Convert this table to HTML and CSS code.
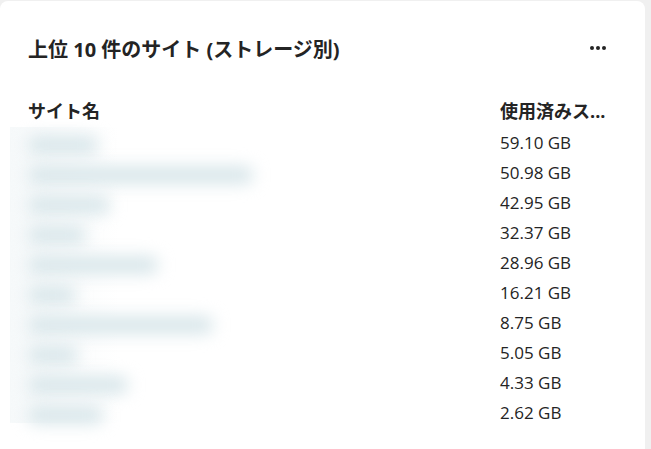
FILE: index.html
```html
<!DOCTYPE html>
<html lang="ja">
<head>
<meta charset="utf-8">
<link rel="stylesheet" href="styles.css">
</head>
<body>
<div class="card">
  <div class="card-head">
    <h2 class="title">上位 10 件のサイト (ストレージ別)</h2>
    <button class="more" aria-label="その他">
      <svg width="18" height="6" viewBox="0 0 18 6"><circle cx="3" cy="3" r="2"/><circle cx="9" cy="3" r="2"/><circle cx="15" cy="3" r="2"/></svg>
    </button>
  </div>
  <div class="table">
    <div class="thead">
      <div class="col-name">サイト名</div>
      <div class="col-size">使用済みス...</div>
    </div>
    <div class="tbody">
      <div class="blurbox">
        <div class="bar" style="width:70px"></div>
        <div class="bar" style="width:225px"></div>
        <div class="bar" style="width:82px"></div>
        <div class="bar" style="width:58px"></div>
        <div class="bar" style="width:130px"></div>
        <div class="bar" style="width:48px"></div>
        <div class="bar" style="width:185px"></div>
        <div class="bar" style="width:50px"></div>
        <div class="bar" style="width:100px"></div>
        <div class="bar" style="width:75px"></div>
      </div>
      <div class="sizes">
        <div class="row">59.10 GB</div>
        <div class="row">50.98 GB</div>
        <div class="row">42.95 GB</div>
        <div class="row">32.37 GB</div>
        <div class="row">28.96 GB</div>
        <div class="row">16.21 GB</div>
        <div class="row">8.75 GB</div>
        <div class="row">5.05 GB</div>
        <div class="row">4.33 GB</div>
        <div class="row">2.62 GB</div>
      </div>
    </div>
  </div>
</div>
</body>
</html>
```

FILE: styles.css
```css
html, body {
  margin: 0;
  padding: 0;
  background: #f0f0f0;
  height: 100%;
  overflow: hidden;
}
body {
  font-family: "Open Sans", "Noto Sans CJK JP", sans-serif;
  color: #242424;
  padding: 1px 6px 0 0;
  box-sizing: border-box;
}
.card {
  background: #ffffff;
  border-radius: 8px;
  height: 460px;
  padding: 28px 28px 0 28px;
  box-sizing: border-box;
}
.card-head {
  display: flex;
  align-items: center;
  justify-content: space-between;
  height: 38px;
}
.title {
  margin: 0;
  font-size: 20px;
  font-weight: 700;
}
.more {
  border: 0;
  background: none;
  padding: 0;
  margin-right: 10px;
  display: flex;
  fill: #242424;
}
.table {
  margin-top: 26px;
}
.thead {
  display: flex;
  height: 34px;
  align-items: center;
  font-weight: 700;
  font-size: 18px;
}
.col-name {
  flex: 1;
}
.col-size {
  width: 117px;
  white-space: nowrap;
}
.tbody {
  display: flex;
}
.blurbox {
  flex: 1;
  margin-left: -18px;
  padding: 9px 0 0 18px;
  background: linear-gradient(90deg, #f6f9fa 0, #ffffff 110px);
  height: 296px;
  box-sizing: border-box;
}
.bar {
  height: 18px;
  margin: 0 0 12px 0;
  background: #d8e6ea;
  border-radius: 8px;
  filter: blur(8px);
}
.sizes {
  width: 117px;
}
.row {
  height: 30px;
  display: flex;
  align-items: center;
  font-size: 17px;
}
```
